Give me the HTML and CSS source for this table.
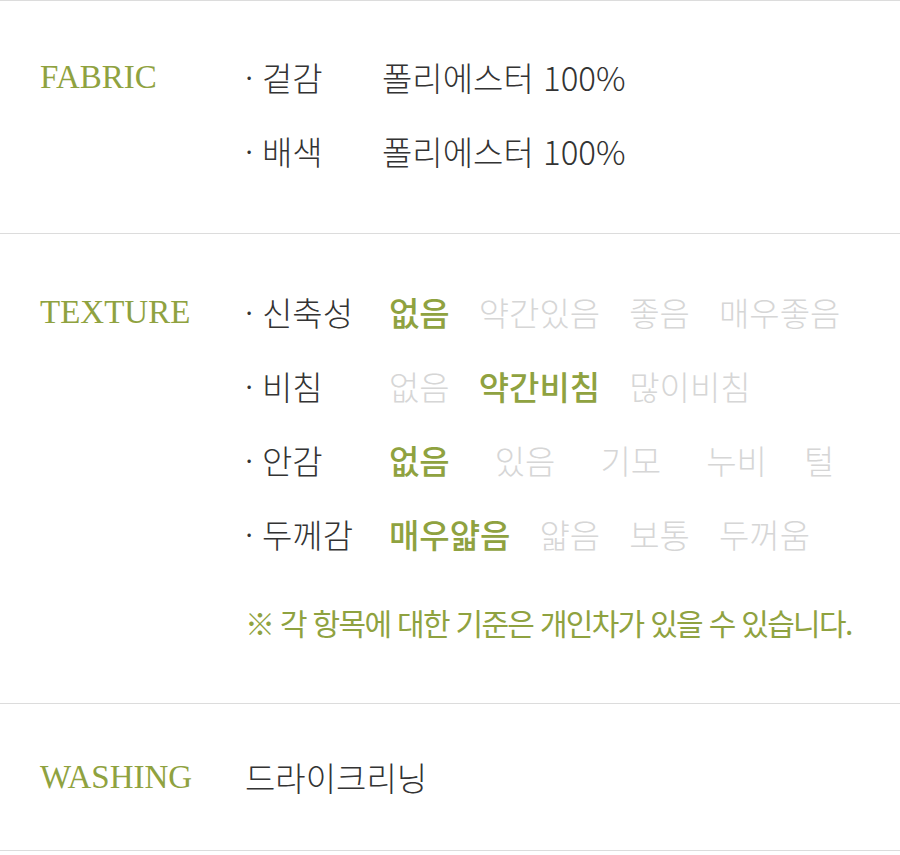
FILE: index.html
```html
<!DOCTYPE html>
<html lang="ko">

<head>
    <meta charset="utf-8">
    <title>소재 정보</title>
    <link rel="stylesheet" href="styles.css">
</head>

<body>
    <div class="spec">
        <section class="spec-row spec-fabric">
            <h3 class="spec-title">FABRIC</h3>
            <ul class="spec-list">
                <li class="spec-item">
                    <span class="item-name">겉감</span>
                    <span class="item-value">폴리에스터 100%</span>
                </li>
                <li class="spec-item">
                    <span class="item-name">배색</span>
                    <span class="item-value">폴리에스터 100%</span>
                </li>
            </ul>
        </section>

        <section class="spec-row spec-texture">
            <h3 class="spec-title">TEXTURE</h3>
            <div class="spec-body">
                <ul class="spec-list">
                    <li class="spec-item">
                        <span class="item-name">신축성</span>
                        <span class="opts">
                            <span class="opt on">없음</span>
                            <span class="opt">약간있음</span>
                            <span class="opt">좋음</span>
                            <span class="opt">매우좋음</span>
                        </span>
                    </li>
                    <li class="spec-item">
                        <span class="item-name">비침</span>
                        <span class="opts">
                            <span class="opt">없음</span>
                            <span class="opt on">약간비침</span>
                            <span class="opt">많이비침</span>
                        </span>
                    </li>
                    <li class="spec-item">
                        <span class="item-name">안감</span>
                        <span class="opts opts-wide">
                            <span class="opt on">없음</span>
                            <span class="opt">있음</span>
                            <span class="opt">기모</span>
                            <span class="opt">누비</span>
                            <span class="opt opt-last">털</span>
                        </span>
                    </li>
                    <li class="spec-item">
                        <span class="item-name">두께감</span>
                        <span class="opts">
                            <span class="opt on">매우얇음</span>
                            <span class="opt">얇음</span>
                            <span class="opt">보통</span>
                            <span class="opt">두꺼움</span>
                        </span>
                    </li>
                </ul>
                <p class="spec-note">※ 각 항목에 대한 기준은 개인차가 있을 수 있습니다.</p>
            </div>
        </section>

        <section class="spec-row spec-washing">
            <h3 class="spec-title">WASHING</h3>
            <p class="spec-text">드라이크리닝</p>
        </section>
    </div>
</body>

</html>
```

FILE: styles.css
```css
html,
body {
    margin: 0;
    padding: 0;
    background: #fff;
}

body {
    font-family: "Noto Sans CJK KR", "Noto Sans", sans-serif;
    font-weight: 300;
    color: #333;
}

.spec {
    width: 900px;
    border-top: 1px solid #dcdcdc;
}

.spec-row {
    display: flex;
    border-bottom: 1px solid #dcdcdc;
    padding: 39px 0 45px;
}

.spec-title {
    width: 245px;
    margin: 0;
    padding-left: 40px;
    box-sizing: border-box;
    font-family: "Liberation Serif", serif;
    font-weight: normal;
    font-size: 33px;
    line-height: 74px;
    color: #8fa240;
    flex-shrink: 0;
}

.spec-list {
    list-style: none;
    margin: 0;
    padding: 0;
}

.spec-item {
    display: flex;
    font-size: 33px;
    line-height: 74px;
    white-space: nowrap;
}

.spec-item::before {
    content: "·";
    width: 17px;
    flex-shrink: 0;
}

.item-name {
    width: 120px;
    flex-shrink: 0;
}

.spec-texture .item-name {
    width: 127px;
}

.opts {
    display: flex;
    gap: 29px;
}

.opts-wide {
    gap: 45px;
}

.opt {
    color: #d6d6d6;
}

.opt-last {
    margin-left: -8px;
}

.opt.on {
    color: #8fa240;
    font-weight: 500;
}

.spec-note {
    margin: 14px 0 0;
    font-size: 30px;
    letter-spacing: -1.7px;
    line-height: 74px;
    font-weight: 400;
    color: #8fa240;
    white-space: nowrap;
}

.spec-texture {
    padding: 41px 0 44px;
}

.spec-washing {
    padding: 36px 0;
}

.spec-text {
    margin: 0;
    font-size: 33px;
    line-height: 74px;
}
```
